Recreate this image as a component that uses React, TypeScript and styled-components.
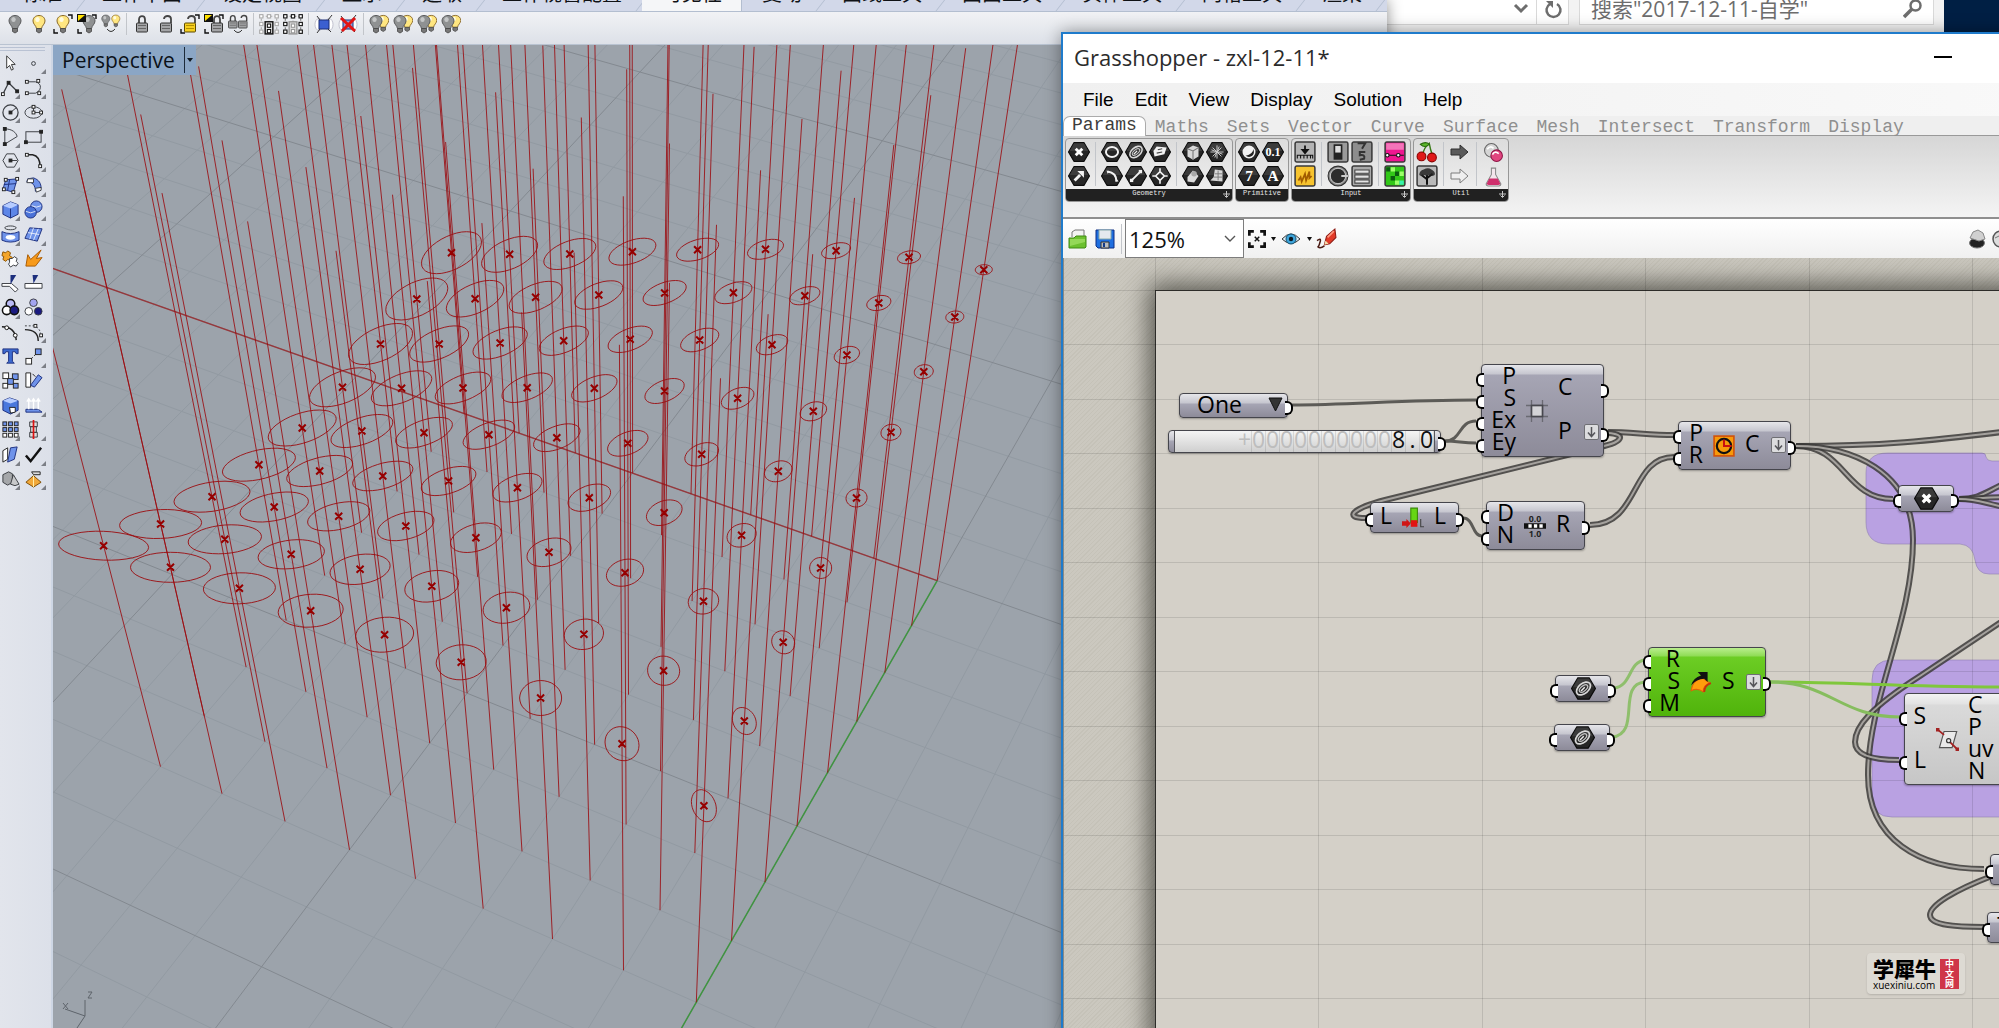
import React from "react";
import styled, { createGlobalStyle } from "styled-components";

const UI = `"Open Sans", "Noto Sans", "Noto Sans CJK SC", sans-serif`;
const CJK = `"Noto Sans CJK SC", "Open Sans", sans-serif`;

const Global = createGlobalStyle`
  * { box-sizing: border-box; }
  body { margin: 0; background: #001f44; font-family: ${UI}; }
  button, input, select { font: inherit; color: inherit; margin: 0; padding: 0; border: 0; background: none; border-radius: 0; }
  svg { display: block; }
`;

const Desktop = styled.main`
  position: relative;
  height: 100vh;
  overflow: hidden;
  background: #001f44;
`;

/* ---------- Rhino window ---------- */

const RhinoWindow = styled.section`
  position: absolute;
  inset: 0 auto 0 0;
  width: 1387px;
  display: flex;
  flex-direction: column;
  background: #dfe2ea;
  box-shadow: 0 0 14px rgba(0, 0, 0, 0.45);
  z-index: 2;
`;

const TabStrip = styled.nav`
  display: flex;
  align-items: flex-end;
  height: 12px;
  flex: none;
  overflow: hidden;
  background: #d2d8e9;
  border-bottom: 1px solid #b3bed0;
  padding-left: 2px;
`;

const RhinoTab = styled.button<{ $active?: boolean }>`
  position: relative;
  flex: none;
  height: 30px;
  padding: 0 20px 6px;
  font-family: ${CJK};
  font-size: 20px;
  line-height: 24px;
  color: #101216;
  background: ${(p) => (p.$active ? "#f5f6f8" : "transparent")};
  &::after {
    content: "";
    position: absolute;
    right: 0;
    bottom: 0;
    width: 1px;
    height: 14px;
    background: #b3bed0;
    transform: ${(p) => (p.$active ? "none" : "skewX(-38deg)")};
  }
`;

const RhinoToolbar = styled.div`
  display: flex;
  align-items: center;
  height: 33px;
  flex: none;
  padding: 0 0 8px 3px;
  background: linear-gradient(#f1f2f5, #dde1e8);
  border-bottom: 1px solid #b9c3d1;
`;

const IconButton = styled.button<{ $w?: number }>`
  width: ${(p) => p.$w ?? 24}px;
  height: 24px;
  flex: none;
  display: grid;
  place-items: center;
`;

const Divider = styled.span<{ $w?: number; $h?: number }>`
  width: ${(p) => p.$w ?? 7}px;
  height: ${(p) => p.$h ?? 22}px;
  flex: none;
  display: flex;
  justify-content: center;
  &::before {
    content: "";
    width: 1px;
    background: #c2c5ca;
  }
`;

const RhinoBody = styled.div`
  flex: 1;
  min-height: 0;
  display: flex;
`;

const Sidebar = styled.div`
  width: 53px;
  flex: none;
  padding-top: 2px;
  background: linear-gradient(90deg, #e2e5ec, #dce0e9);
  border-right: 2px solid #cdd6e4;
`;

const SidebarGrip = styled.div`
  height: 4px;
  width: 45px;
  border-top: 1px solid #b9c2d3;
  border-bottom: 1px solid #b9c2d3;
`;

const ToolGrid = styled.div`
  display: grid;
  grid-template-columns: 20px 26px;
  grid-template-rows: repeat(18, 1fr);
  height: 440px;
`;

const ToolButton = styled.button<{ $more?: boolean }>`
  position: relative;
  display: grid;
  place-items: center;
  min-height: 0;
  &::after {
    content: "";
    display: ${(p) => (p.$more ? "block" : "none")};
    position: absolute;
    right: 0;
    bottom: 1px;
    border-left: 5px solid transparent;
    border-bottom: 5px solid #7c7f86;
  }
`;

const Viewport = styled.div`
  position: relative;
  flex: 1;
  min-width: 0;
  background: #9ca3ab;
  overflow: hidden;
`;

const ViewportTitle = styled.button`
  position: absolute;
  left: 0;
  top: 0;
  height: 30px;
  display: flex;
  align-items: center;
  gap: 9px;
  padding: 0 1px 0 9px;
  background: #8ba6c5;
  color: #0b1118;
  font-size: 21px;
  line-height: 30px;
`;

const TitleArrow = styled.span`
  display: flex;
  align-items: center;
  height: 26px;
  padding: 0 2px;
  border-left: 1px solid #1c2a3a;
  &::before {
    content: "";
    border: 3px solid transparent;
    border-top: 4px solid #101820;
    border-bottom: 0;
  }
`;

/* ---------- Explorer window ---------- */

const ExplorerWindow = styled.section`
  position: absolute;
  top: 0;
  left: 1387px;
  width: 557px;
  height: 60px;
  display: flex;
  align-items: flex-start;
  background: #f3f3f3;
  z-index: 1;
`;

const AddressBar = styled.div`
  display: flex;
  width: 182px;
  height: 25px;
  background: #fff;
  border: 1px solid #d9d9d9;
  border-width: 0 1px 1px 0;
  justify-content: flex-end;
`;

const AddressButton = styled.button<{ $w: number; $line?: boolean }>`
  width: ${(p) => p.$w}px;
  display: grid;
  place-items: center;
  color: #6d6d6d;
  border-left: 1px solid ${(p) => (p.$line ? "#d9d9d9" : "transparent")};
  height: 24px;
  padding-bottom: 6px;
`;

const SearchBox = styled.label`
  display: flex;
  width: 355px;
  height: 25px;
  margin-left: 10px;
  padding: 0 10px 6px 11px;
  background: #fff;
  border: 1px solid #d9d9d9;
  border-top: 0;
  color: #6d6d6d;
  align-items: center;
`;

const SearchInput = styled.input`
  flex: 1;
  min-width: 0;
  height: 30px;
  font-family: "Open Sans", "Noto Sans CJK SC", sans-serif;
  font-size: 21px;
  line-height: 30px;
  outline: 0;
`;

/* ---------- Grasshopper window ---------- */

const GHWindow = styled.section`
  position: absolute;
  left: 1061px;
  right: -180px;
  top: 32px;
  bottom: -40px;
  display: flex;
  flex-direction: column;
  border: 2px solid #1f7bcb;
  background: #fff;
  box-shadow: 0 0 16px rgba(0, 0, 0, 0.4);
  z-index: 3;
`;

const TitleBar = styled.header`
  display: flex;
  align-items: center;
  height: 49px;
  flex: none;
  padding: 0 225px 3px 11px;
  font-size: 22px;
  color: #2b2b2b;
`;

const WindowTitle = styled.h1`
  margin: 0;
  flex: 1;
  font: inherit;
`;

const Minimize = styled.button`
  width: 18px;
  height: 20px;
  display: grid;
  place-items: center;
  &::before {
    content: "";
    width: 18px;
    height: 2px;
    background: #000;
  }
`;

const MenuBar = styled.nav`
  display: flex;
  align-items: center;
  gap: 21px;
  height: 33px;
  flex: none;
  padding-left: 20px;
  background: linear-gradient(90deg, #f0f0f0, #fafafa);
  font-family: "Liberation Sans", Arial, sans-serif;
  font-size: 19px;
  color: #000;
`;

const MenuItem = styled.button`
  line-height: 24px;
`;

const CategoryTabs = styled.nav`
  display: flex;
  height: 20px;
  flex: none;
  background: #efefef;
  border-bottom: 1px solid #999;
  font-family: "Liberation Mono", monospace;
  font-size: 18px;
`;

const CategoryTab = styled.button<{ $active?: boolean }>`
  height: ${(p) => (p.$active ? 20 : 19)}px;
  padding: ${(p) => (p.$active ? "0 8px 2px" : "2px 8px 0")};
  line-height: ${(p) => (p.$active ? 17 : 16)}px;
  color: ${(p) => (p.$active ? "#3c3c3c" : "#8f8f8f")};
  background: ${(p) => (p.$active ? "#fff" : "transparent")};
  border: 1px solid ${(p) => (p.$active ? "#ababab" : "transparent")};
  border-width: 1px 1px 0;
  border-radius: 7px 7px 0 0;
`;

const Ribbon = styled.div`
  display: flex;
  align-items: flex-start;
  gap: 2px;
  height: 83px;
  flex: none;
  padding: 2px 2px 0;
  background: linear-gradient(#d6d6d6, #f4f4f4);
  border-bottom: 2px solid #8f8f8f;
`;

const RibbonPanel = styled.div`
  display: flex;
  flex-direction: column;
  height: 64px;
  border: 1px solid #979797;
  border-radius: 4px;
  background: linear-gradient(#dcdcdc, #f2f2f2);
  overflow: hidden;
`;

const RibbonIcons = styled.div`
  display: flex;
  align-items: center;
  height: 50px;
  padding: 0 3px 0 1px;
`;

const RibbonGroup = styled.div`
  display: grid;
  grid-auto-flow: column;
  grid-template-rows: 24px 24px;
  grid-auto-columns: 24px;
`;

const RibbonLabel = styled.div`
  position: relative;
  display: grid;
  place-items: center;
  height: 12px;
  padding-bottom: 4px;
  background: #212121;
  color: #e6e6e6;
  font-family: "Liberation Mono", monospace;
  font-size: 7px;
  line-height: 8px;
`;

const PanelExpand = styled.span`
  position: absolute;
  right: 2px;
  top: 2px;
  width: 7px;
  height: 7px;
`;

const GHToolbar = styled.div`
  display: flex;
  align-items: center;
  height: 39px;
  flex: none;
  padding: 0 164px 0 1px;
  background: linear-gradient(#fff, #f0f0f0);
`;

const ZoomField = styled.label`
  position: relative;
  display: flex;
  align-items: center;
  width: 119px;
  height: 39px;
  border: 1px solid #7d7d7d;
  background: #fff;
  svg {
    position: absolute;
    right: 7px;
    pointer-events: none;
  }
`;

const ZoomSelect = styled.select`
  appearance: none;
  width: 100%;
  height: 36px;
  padding-left: 3px;
  font-size: 22px;
  line-height: 36px;
  color: #111;
  outline: 0;
`;

const Spacer = styled.span`
  flex: 1;
`;

const Canvas = styled.div`
  position: relative;
  flex: 1;
  min-height: 0;
  overflow: hidden;
  border-left: 1px solid #8a8a86;
  background: repeating-linear-gradient(135deg, #cbc8bf 0 2px, #c5c2b8 2px 3px);
`;

/* The document space: nodes keep the coordinates they have on the free canvas. */
const Space = styled.div`
  position: absolute;
  left: -1064px;
  top: -258px;
  width: 2200px;
  height: 1200px;
  font-size: 23px;
  color: #000;
`;

const Sheet = styled.div`
  position: absolute;
  left: 1155px;
  top: 290px;
  right: -200px;
  bottom: -200px;
  background: #d4d0c8;
  border: 1px solid #33322f;
  box-shadow: 0 0 24px 6px rgba(40, 40, 34, 0.7);
`;

const Wires = styled.svg`
  position: absolute;
  inset: 0;
`;

type Tone = "grey" | "green" | "light";
const tones: Record<Tone, string> = {
  grey: "linear-gradient(#e6e6ea 0, #c6c6cf 9px, #a6a5b4 10px, #8d8b99 100%)",
  green: "linear-gradient(#b9ee8d 0, #8fdc55 8px, #6ccd24 9px, #50b30b 100%)",
  light: "linear-gradient(#f2f2f2 0, #e2e2e2 10px, #dadada 11px, #c6c6c6 100%)",
};

const NodeBox = styled.div<{ $x: number; $y: number; $w: number; $h: number; $tone?: Tone }>`
  position: absolute;
  left: ${(p) => p.$x}px;
  top: ${(p) => p.$y}px;
  width: ${(p) => p.$w}px;
  height: ${(p) => p.$h}px;
  display: flex;
  align-items: stretch;
  gap: 10px;
  border: 1px solid #45454c;
  border-radius: 4px;
  background: ${(p) => tones[p.$tone ?? "grey"]};
  box-shadow: 0 1px 2px rgba(0, 0, 0, 0.3);
  line-height: 22px;
`;

const PortColumn = styled.div<{ $w?: number }>`
  display: flex;
  flex-direction: column;
  justify-content: center;
  ${(p) => (p.$w !== undefined ? `width: ${p.$w}px;` : "flex: 1;")}
`;

const port = `
  content: "";
  position: absolute;
  top: calc(50% - 5px);
  width: 6px;
  height: 10px;
  border: 2px solid #000;
  background: #fff;
`;

const InPort = styled.div<{ $h?: number }>`
  position: relative;
  flex: none;
  height: ${(p) => p.$h ?? 22}px;
  display: flex;
  justify-content: flex-end;
  align-items: center;
  padding-bottom: 5px;
  &::before {
    ${port}
    left: -6px;
    border-right: 0;
    border-radius: 6px 0 0 6px;
  }
`;

const OutPort = styled.div<{ $h?: number }>`
  position: relative;
  flex: none;
  height: ${(p) => p.$h ?? 22}px;
  display: flex;
  justify-content: space-between;
  align-items: center;
  padding: 0 4px 5px 0;
  &::after {
    ${port}
    right: -6px;
    border-left: 0;
    border-radius: 0 6px 6px 0;
  }
`;

const NodeIcon = styled.div`
  width: 22px;
  display: grid;
  place-items: center;
`;

const GraftMark = styled.span`
  width: 15px;
  height: 16px;
  display: grid;
  place-items: center;
  margin-top: 4px;
  border: 1px solid #6f6f74;
  border-radius: 2px;
  background: #dcdcde;
`;

const ValueList = styled.button`
  flex: 1;
  display: flex;
  align-items: center;
  justify-content: space-between;
  padding: 0 4px 3px 17px;
`;

const Scroller = styled.div`
  flex: 1;
  display: flex;
  justify-content: flex-end;
  height: 21px;
  margin: 0 5px;
  border: 1px solid #55555b;
  border-width: 0 1px;
  overflow: hidden;
  background: linear-gradient(#f4f4f4, #cfcfcf);
  line-height: 16px;
`;

const Digit = styled.span<{ $on?: boolean }>`
  width: 14px;
  text-align: center;
  border-right: 1px solid rgba(0, 0, 0, 0.1);
  color: ${(p) => (p.$on ? "#111" : "#bdbdbd")};
`;

const Watermark = styled.div`
  position: absolute;
  left: 1867px;
  top: 953px;
  width: 98px;
  height: 41px;
  display: flex;
  gap: 3px;
  align-items: center;
  padding: 0 6px;
  border-radius: 4px;
  background: #dddad3;
  box-shadow: 0 1px 2px rgba(0, 0, 0, 0.15);
`;

const WatermarkText = styled.div`
  flex: 1;
  display: flex;
  flex-direction: column;
  font-family: ${CJK};
  font-size: 21px;
  font-weight: 900;
  line-height: 22px;
`;

const WatermarkUrl = styled.small`
  font-family: "Open Sans", sans-serif;
  font-weight: 400;
  font-size: 10px;
  line-height: 12px;
`;

const Seal = styled.div`
  width: 19px;
  height: 30px;
  flex: none;
  display: grid;
  justify-items: center;
  background: #cf3548;
  color: #fff;
  font-family: ${CJK};
  font-weight: 700;
  font-size: 9px;
  line-height: 10px;
`;

/* ---------- Perspective scene ---------- */

const projectPoint = (u: number, v: number, top = 0): [number, number] => {
  const U = u / 8;
  const V = v / 8;
  const d = 1 + 0.1009 * U + 0.1968 * V - 0.2802 * top;
  return [
    (696.3 - 519.6 * U + 425.4 * V - 177.7 * top) / d,
    (1002.3 - 158.3 * U - 307.3 * V - 730 * top) / d,
  ];
};

/* Height on screen of each circle centre: one list per row, far column first. */
const centreY = [
  [545.7, 567.3, 588.3, 610.7, 634.7, 662.3, 698, 743.7, 805.7],
  [524, 539.3, 554.3, 569.3, 586.3, 607.7, 634.3, 670.7, 721],
  [496.7, 507, 516.3, 526, 537.7, 552.3, 572.7, 601.3, 642.3],
  [464.7, 471, 476, 481, 487.7, 497.7, 512.7, 535.3, 568],
  [428, 431, 432.7, 434.7, 437.7, 443.3, 454.3, 471.3, 498],
  [387.3, 388.3, 388, 387.7, 388.3, 391, 398.3, 411.3, 432.3],
  [344, 344, 343, 340.7, 339.3, 340, 344.7, 355, 371.7],
  [299, 298.7, 297.3, 295, 293, 292.7, 295.7, 303, 317],
  [252.7, 254.3, 254, 251.7, 249.7, 249.3, 250.7, 257.3, 269.7],
];

/* Outline size and slant along the four borders; the inside is blended from them. */
type Border = number[];
const blend = (near: Border, far: Border, left: Border, right: Border) => (i: number, v: number) => {
  const s = i / 8;
  const t = v / 8;
  return (
    (1 - t) * near[i] + t * far[i] + (1 - s) * left[v] + s * right[v] -
    ((1 - s) * (1 - t) * near[0] + s * (1 - t) * near[8] + (1 - s) * t * far[0] + s * t * far[8])
  );
};
const widthAt = blend(
  [90, 80, 72, 65, 58, 50, 42, 34, 25],
  [60, 56, 52, 47, 42, 36, 29, 23, 17],
  [90, 82, 76, 73, 68, 66, 64, 62, 60],
  [25, 24, 23, 22, 21, 20, 19, 18, 17]
);
const heightAt = blend(
  [29, 30, 31, 33, 35, 35, 35, 34, 32],
  [42, 36, 31, 27, 23, 20, 16, 13, 10],
  [29, 29, 31, 33, 36, 39, 41, 42, 42],
  [32, 27, 23, 21, 18, 16, 14, 12, 10]
);
const slantAt = blend(
  [-0.12, 0, 0.05, 0.1, 0.1, 0.05, 0, -0.1, -0.25],
  [0.53, 0.53, 0.52, 0.5, 0.47, 0.42, 0.35, 0.2, 0.05],
  [-0.12, 0.1, 0.33, 0.45, 0.53, 0.55, 0.55, 0.54, 0.53],
  [-0.25, -0.2, -0.1, 0, 0.05, 0.1, 0.1, 0.1, 0.05]
);

const seg = (a: [number, number], b: [number, number]) =>
  `M${a[0].toFixed(1)} ${a[1].toFixed(1)}L${b[0].toFixed(1)} ${b[1].toFixed(1)}`;

const buildScene = () => {
  let minor = "";
  let major = "";
  let columns = "";
  let rings = "";
  let marks = "";
  for (let u = -20; u <= 60; u++) {
    const d = seg(projectPoint(u, -10), projectPoint(u, 70));
    if (u % 5 === 0) major += d;
    else minor += d;
  }
  for (let v = -10; v <= 70; v++) {
    const d = seg(projectPoint(-20, v), projectPoint(60, v));
    if ((v - 8) % 5 === 0) major += d;
    else minor += d;
  }
  centreY.forEach((row, v) =>
    row.forEach((cy, i) => {
      const a = projectPoint(8 - i, v);
      const b = projectPoint(8 - i, v, 1);
      columns += seg(a, b);
      const cx = a[0] + ((b[0] - a[0]) * (cy - a[1])) / (b[1] - a[1]);
      const w = widthAt(i, v) / 2;
      const h = heightAt(i, v) / 2;
      const k = slantAt(i, v);
      for (let n = 0; n <= 36; n++) {
        const t = (n * Math.PI) / 18;
        rings += `${n ? "L" : "M"}${(cx + w * Math.cos(t)).toFixed(1)} ${(cy - h * Math.sin(t + k)).toFixed(1)}`;
      }
      marks += `M${(cx - 3.5).toFixed(1)} ${cy - 3.5}l7 7m0 -7l-7 7`;
    })
  );
  return { minor, major, columns, rings, marks };
};

const scene = buildScene();

const Perspective = () => (
  <svg width="100%" height="100%" fill="none" aria-label="Perspective view">
    <g transform="translate(-53 -45)">
      <path d={scene.minor} stroke="#929aa2" />
      <path d={scene.major} stroke="#838990" />
      <path d={seg(projectPoint(0, 8), projectPoint(30, 8))} stroke="#96383c" strokeWidth="1.4" />
      <path d={seg(projectPoint(0, 8), projectPoint(0, -4))} stroke="#3f9440" strokeWidth="1.5" />
      <path d={scene.columns} stroke="#9b0c10" strokeOpacity=".85" />
      <path d={scene.rings} stroke="#9b0c10" strokeOpacity=".9" />
      <path d={scene.marks} stroke="#960000" strokeWidth="2" />
      <g stroke="#5e646b">
        <path d="M85 1000V1016L65 1009M85 1016l-8 12" />
        <path d="M88 992h4l-4 6h4M63 1003l5 6m0-6l-5 6" />
      </g>
    </g>
  </svg>
);

/* ---------- Icons ---------- */

const Svg = ({ s = 20, h, box = "0 0 20 20", children }: { s?: number; h?: number; box?: string; children: React.ReactNode }) => (
  <svg width={s} height={h ?? s} viewBox={box} fill="none">
    {children}
  </svg>
);

const Corners = () => <path d="M1 15v4h4M15 1h4v4" stroke="#111" strokeWidth="1.4" />;
const Swatch = () => <><path d="M0 0h9v8H0z" fill="#111" /><path d="M1 1h7L1 7z" fill="#ffe000" /></>;

const Bulb = ({ lit, x = 0, k = 1 }: { lit?: boolean; x?: number; k?: number }) => (
  <g transform={`translate(${x} 0) scale(${k})`}>
    <path d="M10 1.5c-3.600 0-6 2.300-6 5.500 0 3 3 4.500 3.500 7.500h5C13 11.500 16 10 16 7c0-3.200-2.400-5.500-6-5.500z" fill={lit ? "#ffe680" : "#8f9192"} stroke={lit ? "#8a6a2a" : "#5a5b5d"} />
    <path d="M7.500 14.500h5v3l-2.500 1.500-2.500-1.500z" fill="#777" stroke="#444" strokeWidth=".8" />
    <ellipse cx="8.500" cy="5.500" rx="2.200" ry="2.500" fill={lit ? "#fffbe0" : "#c4c6c7"} />
  </g>
);

const DoubleBulb = () => (
  <Svg>
    <Bulb lit x={5} k={0.92} />
    <Bulb x={-3} />
  </Svg>
);

const Lock = ({ open, gold, x = 0, k = 1 }: { open?: boolean; gold?: boolean; x?: number; k?: number }) => (
  <g transform={`translate(${x} 0) scale(${k})`}>
    <path d={open ? "M8 5c0-4 7-4 7 0v4" : "M7 9V5.500c0-4.500 6-4.500 6 0V9"} stroke="#444" strokeWidth="1.800" />
    <rect x="4.500" y="9" width="11" height="9" rx="1" fill={gold ? "#f6cf1e" : "#a3a4a6"} stroke={gold ? "#5c4a00" : "#333"} />
    <path d="M6 11.500h8M6 14.500h8" stroke={gold ? "#b28f00" : "#666"} />
  </g>
);

const Dots = ({ dark }: { dark?: boolean }) => (
  <Svg s={22}>
    <path d="M3 3h14v14H3zM3 10h14M10 3v14" stroke={dark ? "#777" : "#aaa"} strokeDasharray="2 2" />
    {[3, 10, 17].map((x) => [3, 10, 17].map((y) => <rect key={`${x}-${y}`} x={x - 1.5} y={y - 1.5} width="3" height="3" fill="#fff" stroke={dark ? "#111" : "#aaa"} />))}
    <rect x="6.500" y="8" width="7" height="11" fill={dark ? "#ddd" : "#f0f0f0"} stroke={dark ? "#999" : "#111"} strokeWidth="1.300" />
    <rect x="8.500" y="10" width="3" height="3" fill="#fff" stroke={dark ? "#999" : "#111"} />
    <rect x="8.500" y="15" width="3" height="3" fill="#fff" stroke={dark ? "#999" : "#111"} />
  </Svg>
);

const Barrel = ({ off }: { off?: boolean }) => (
  <Svg>
    <ellipse cx="5" cy="10.500" rx="4" ry="6" fill="#fff" stroke="#aab" strokeWidth=".7" />
    <ellipse cx="15" cy="10.500" rx="4" ry="6" fill="#fff" stroke="#aab" strokeWidth=".7" />
    <rect x="5" y="6" width="10" height="9" fill={off ? "#8da0dc" : "#3b5fd0"} stroke="#1c2e78" />
    <path d="M3 19L6 15M14 6l4-5M3 2l3 4M14 15l3 3" stroke="#333" />
    {off && <path d="M3 4l14 13M17 4L4 17" stroke="#e31313" strokeWidth="3" />}
  </Svg>
);

const toolbarIcons: (React.ReactNode | null)[] = [
  <Svg><Bulb /></Svg>,
  <Svg><Bulb lit /></Svg>,
  <Svg><Bulb lit /><Corners /></Svg>,
  <Svg><Bulb x={2} /><Corners /><Swatch /></Svg>,
  <Svg><Bulb k={0.68} x={-2} /><Bulb lit k={0.68} x={8} /><path d="M6 15q4 5 8 0" stroke="#333" /></Svg>,
  null,
  <Svg><Lock /></Svg>,
  <Svg><Lock open /></Svg>,
  <Svg><Lock open gold /><Corners /></Svg>,
  <Svg><Lock x={3} /><Corners /><Swatch /></Svg>,
  <Svg><Lock k={0.78} x={-3} /><Lock open k={0.78} x={7} /><path d="M6 16q4 5 8 0" stroke="#333" /></Svg>,
  null,
  <Dots />,
  <Dots dark />,
  null,
  <Barrel />,
  <Barrel off />,
  null,
  <DoubleBulb />,
  <DoubleBulb />,
  <DoubleBulb />,
  <DoubleBulb />,
];

const K = "#3a3d42";
const B = "#6f93ea";
const N = "#1d2f7d";
const Sq = ({ x, y, f = "#fff" }: { x: number; y: number; f?: string }) => <rect x={x - 1.5} y={y - 1.5} width="3" height="3" fill={f} stroke="#222" />;

const sideIcons: [React.ReactNode, boolean][] = [
  [<path d="M6 2v13l3-3 2 5 2-1-2-5h4z" fill="#fff" stroke="#333" />, false],
  [<circle cx="10" cy="10" r="2" stroke={K} />, true],
  [<><path d="M2 17L8 5l9 9" stroke={K} strokeWidth="1.300" /><Sq x={2} y={17} /><Sq x={8} y={5} f="#222" /><Sq x={17} y={14} f="#222" /></>, true],
  [<><path d="M3 4h9c8 2 6 10 0 12H3" stroke={K} /><Sq x={3} y={4} /><Sq x={15} y={3} /><Sq x={3} y={16} /><Sq x={16} y={16} /></>, true],
  [<><circle cx="10" cy="10" r="8" stroke={K} strokeWidth="1.300" /><path d="M10 10l6-5" stroke={K} /><Sq x={10} y={10} f="#222" /></>, true],
  [<><ellipse cx="10" cy="10" rx="9" ry="6" stroke={K} /><path d="M10 3v7h9" stroke={K} /><Sq x={10} y={4} /><Sq x={10} y={10} /><Sq x={18} y={10} /></>, true],
  [<><path d="M4 2c8 0 12 4 13 8L4 18z" stroke={K} /><Sq x={4} y={2} f="#222" /><Sq x={4} y={18} f="#222" /></>, true],
  [<><rect x="2" y="5" width="16" height="11" stroke={K} /><Sq x={2} y={16} f="#222" /><Sq x={18} y={5} f="#222" /></>, true],
  [<><path d="M6 3h8l4 7-4 7H6l-4-7z" stroke={K} /><path d="M10 10h7" stroke={K} /><Sq x={10} y={10} f="#222" /></>, true],
  [<><path d="M2 4h7c6 1 8 6 8 13" stroke="#222" strokeWidth="1.600" /><Sq x={3} y={4} /><Sq x={17} y={16} /></>, true],
  [<><path d="M5 4l12-1-4 14L2 14z" fill={B} stroke={N} /><path d="M9 4L7 15M3 9l13-1" stroke={N} /><Sq x={5} y={4} /><Sq x={17} y={3} /><Sq x={3} y={14} /><Sq x={13} y={17} /></>, true],
  [<><path d="M4 3l6-1c6 2 8 6 8 11l-6 3C12 10 9 6 3 6z" fill={B} stroke={N} /><path d="M4 3h6v4H3zM12 13l6-1v3l-5 2z" fill="#fff" stroke={K} /></>, true],
  [<><path d="M2 6l8-4 8 3v10l-8 4-8-4z" fill="#5d86e8" stroke={N} /><path d="M2 6l8 3 8-4-8-3z" fill="#b6ccff" /><path d="M10 9v10" stroke={N} /></>, true],
  [<><circle cx="13" cy="7" r="6" fill={B} stroke={N} /><circle cx="7" cy="13" r="6" fill="#4a72d8" stroke={N} /><path d="M2 12q5 3 10 0M8 6q5 3 10 0" stroke="#fff" strokeWidth=".8" /></>, true],
  [<><ellipse cx="10" cy="3" rx="6" ry="2" stroke={K} /><path d="M1 7q9 4 18 0v9q-9 4-18 0z" fill={B} stroke={N} /><ellipse cx="10" cy="13" rx="5" ry="2.500" fill="#fff" /></>, true],
  [<><path d="M6 3l13 1-5 13-13-3z" fill={B} stroke={N} /><path d="M10 3L6 15M15 4l-5 12M4 8l12 2" stroke="#fff" strokeWidth=".8" /></>, true],
  [<><path d="M2 3l3 1 2-2 3 2-1 3 3 2-2 3-3-1-2 2-3-2 1-3-2-1z" fill="#f4a52a" stroke="#8a5200" /><path d="M9 10l3 0 2-2 3 2-1 3 2 2-2 3-3-1-3 2-2-3 1-2z" fill="#fff" stroke={K} /></>, false],
  [<path d="M2 18L4 6l3 5L18 1l-5 9 6-1-7 9z" fill="#f79a1b" stroke="#a85a00" />, false],
  [<><path d="M1 10h10l7 6-3 3-6-6H1z" fill="#fff" stroke={K} /><path d="M10 1h6l-6 10z" fill={N} /></>, false],
  [<><path d="M1 10h18v5H1z" fill="#fff" stroke={K} /><path d="M9 1h6l-5 9z" fill={N} /></>, false],
  [<><circle cx="10" cy="6" r="4.500" fill="#b9baf6" stroke="#111" strokeWidth="1.600" /><circle cx="6" cy="13" r="4.500" fill="#fff" stroke="#111" strokeWidth="1.600" /><circle cx="14" cy="13" r="4.500" fill="#1a1a80" stroke="#111" strokeWidth="1.600" /></>, true],
  [<><circle cx="10" cy="5" r="4" fill="#a3a4f0" stroke={K} /><circle cx="5" cy="14" r="4" fill="#fff" stroke={K} /><circle cx="15" cy="14" r="4" fill="#1a1a80" stroke={K} /></>, false],
  [<><path d="M1 4q14 0 15 14" stroke="#222" strokeWidth="1.500" /><circle cx="6" cy="5" r="2" fill="#fff" stroke="#111" /><circle cx="15" cy="13" r="2" fill="#fff" stroke="#111" /></>, false],
  [<><path d="M1 7q14 0 14 12" stroke="#222" strokeWidth="1.500" /><path d="M1 3h10q7 3 7 12" stroke={K} strokeDasharray="2 2" /><Sq x={12} y={3} /><Sq x={18} y={13} /></>, true],
  [<path d="M2 2h16v5h-2l-1-2h-3v10l2 2H6l2-2V5H5L4 7H2z" fill="#3d6ad0" stroke={N} />, false],
  [<><path d="M5 15l9-9" stroke="#222" strokeDasharray="2 2" /><rect x="2" y="12" width="6" height="6" fill="#fff" stroke="#222" /><rect x="12" y="2" width="6" height="6" fill={B} stroke="#222" /></>, true],
  [<><rect x="2" y="2" width="6" height="6" fill="#fff" stroke="#222" /><rect x="12" y="3" width="6" height="6" fill={B} stroke="#222" /><rect x="7" y="8" width="6" height="6" fill={B} stroke="#222" /><rect x="2" y="13" width="5" height="5" fill="#fff" stroke="#222" /><rect x="13" y="13" width="5" height="5" fill={B} stroke="#222" /></>, false],
  [<><path d="M2 2h5v15H2z" fill="#fff" stroke="#222" /><path d="M15 4l4 3-8 10-4-2z" fill={B} stroke={N} /><path d="M9 3l3 3" stroke="#222" /></>, false],
  [<><path d="M2 5l7-3 9 3v10l-8 4-8-4z" fill="#4a78dd" stroke={N} /><path d="M2 5l8 3 8-3-9-3z" fill="#b6ccff" /><path d="M9 12h6v5l-5 1z" fill="#fff" stroke="#222" /></>, true],
  [<><path d="M2 14h13l4 3H2z" fill={B} stroke={N} /><path d="M5 14V3M10 14V3M15 14V3M3 6l2-3 2 3M8 6l2-3 2 3M13 6l2-3 2 3" stroke="#fff" strokeWidth="1.500" /></>, true],
  [<>{[2, 8, 14].map((x) => [2, 8, 14].map((y) => <rect key={`${x}${y}`} x={x} y={y} width="4" height="4" fill={y === 14 ? "#fff" : B} stroke="#222" />))}</>, true],
  [<><path d="M6 2h8v5H6zM7 7h6v6H7zM6 13h8v5H6z" fill="#ddd" stroke={K} /><path d="M10 0v20" stroke="#d11" strokeWidth="1.800" /></>, true],
  [<><path d="M2 6l5-3v12l-5 3z" fill="#fff" stroke="#222" /><path d="M10 3l7-1-3 13-7 3z" fill={B} stroke={N} /></>, true],
  [<path d="M2 11l5 6L18 3" stroke="#111" strokeWidth="2.600" />, true],
  [<><path d="M2 6l6-3 4 2v9l-5 3-5-3z" fill="#a5a7aa" stroke={K} /><path d="M13 6l6 10q-4 3-9 0z" fill="#c8c9cb" stroke={K} /></>, true],
  [<><path d="M2 14l8-7 8 7-8 5z" fill="#f2a93a" stroke="#7a4a00" /><path d="M10 7v12" stroke="#fff0b0" /><path d="M8 3h9v3h-7z" fill="#ddd" stroke="#222" /></>, true],
];

const Hex = ({ s = 22, children }: { s?: number; children?: React.ReactNode }) => (
  <Svg s={s}>
    <path d="M5.500 1.500h9L19.500 10l-5 8.500h-9L.500 10z" fill="#262626" stroke="#0c0c0c" />
    <path d="M5.500 2h9l4 7H1.500z" fill="#4a4a4a" opacity=".6" />
    {children}
  </Svg>
);

const Glyph = ({ t, size }: { t: string; size: number }) => (
  <text x="10" y={10 + size * 0.35} textAnchor="middle" fill="#fff" fontFamily="Liberation Serif, serif" fontWeight="700" fontSize={size}>
    {t}
  </text>
);

const Tile = ({ fill = "#b4b4b4", children }: { fill?: string; children?: React.ReactNode }) => (
  <Svg s={22}>
    <rect x="1" y="1" width="18" height="18" rx="1.500" fill={fill} stroke="#3a3a3a" strokeWidth="1.400" />
    {children}
  </Svg>
);

const W = "#f2f2f2";
const CurveMark = (
  <>
    <ellipse cx="10" cy="10" rx="6.500" ry="4" transform="rotate(-40 10 10)" stroke="#d8d8d8" strokeWidth="1.400" />
    <ellipse cx="10" cy="10" rx="4" ry="2" transform="rotate(-40 10 10)" stroke="#c4c4c4" />
    <path d="M8 12l3-3" stroke="#eee" strokeWidth="1.200" />
  </>
);
const CrossMark = <path d="M7 7l6 6M13 7l-6 6" stroke="#fff" strokeWidth="2.600" />;

type Panel = { label: string; more: boolean; groups: React.ReactNode[][] };
const panels: Panel[] = [
  {
    label: "Geometry",
    more: true,
    groups: [
      [<Hex>{CrossMark}</Hex>, <Hex><path d="M6 14l5-5" stroke={W} strokeWidth="2.600" /><path d="M8.500 5.500h6v6z" fill={W} /></Hex>],
      [
        <Hex><ellipse cx="10" cy="10" rx="5.500" ry="4.500" stroke={W} strokeWidth="1.800" /></Hex>,
        <Hex><path d="M6 6q8 1 8 9" stroke={W} strokeWidth="1.800" /><path d="M5 5l3 1-2 2zM13 15h3l-2-3z" fill={W} /></Hex>,
        <Hex>{CurveMark}</Hex>,
        <Hex><path d="M6 14l8-8" stroke={W} strokeWidth="1.800" /><rect x="4.500" y="12.500" width="3" height="3" fill={W} /><rect x="12.500" y="4.500" width="3" height="3" fill={W} /></Hex>,
        <Hex><path d="M4 9l3-4 9 1-2 6-9 2z" fill={W} /><path d="M8 8l4-1M7 11l5-1" stroke="#444" /></Hex>,
        <Hex><path d="M6 10l4-4 4 4-4 4zM10 3v3M10 14v3M3 10h3M14 10h3" stroke={W} strokeWidth="1.500" /></Hex>,
      ],
      [
        <Hex><path d="M5 7l5-3 5 2v8l-5 3-5-3z" fill="#d8d8d8" /><path d="M5 7l5 2 5-3M10 9v8" stroke="#777" /></Hex>,
        <Hex><path d="M5 11l5-6 5 5-4 6-6-1z" fill="#ddd" /><circle cx="11" cy="8" r="2.500" fill="#aaa" /></Hex>,
        <Hex><path d="M4 10h12M10 4v12M6 6l8 8M14 6l-8 8M5 8l10 4M8 15l4-10" stroke="#c8c8c8" strokeWidth=".9" /></Hex>,
        <Hex><path d="M8 4l7 1v10l-11-1 3-3z" fill="#d8d8d8" /><path d="M8 8h7M7 11h8M11 5v9" stroke="#777" strokeWidth=".8" /></Hex>,
      ],
    ],
  },
  {
    label: "Primitive",
    more: false,
    groups: [
      [
        <Hex><circle cx="10" cy="10" r="5.200" fill="#222" stroke={W} strokeWidth="1.400" /><path d="M6.300 13.700A5.200 5.200 0 0113.700 6.300q1 5-7.400 7.400z" fill={W} /></Hex>,
        <Hex><Glyph t="7" size={14} /></Hex>,
        <Hex><Glyph t="0.1" size={11} /></Hex>,
        <Hex><Glyph t="A" size={14} /></Hex>,
      ],
    ],
  },
  {
    label: "Input",
    more: true,
    groups: [
      [
        <Tile><path d="M10 4v6M7.500 8l2.500 3 2.500-3z" stroke="#111" strokeWidth="1.600" fill="#111" /><path d="M3 16v-3h14v3M6 13v3M9 13v3M12 13v3M15 13v3" stroke="#111" /></Tile>,
        <Tile fill="#f7c32e"><path d="M4 14l2-3 1 4 3-7 1 6 3-8v6l2-2" stroke="#a15c00" strokeWidth="1.600" /></Tile>,
      ],
      [
        <Tile fill="#9a9a9a"><rect x="6" y="3" width="8" height="14" fill="#222" /><rect x="7.500" y="4.500" width="5" height="6" fill="#ddd" /></Tile>,
        <Svg s={22}><circle cx="10" cy="10" r="9" fill="#8a8a8a" stroke="#333" /><circle cx="10" cy="10" r="7" fill="#2c2c2c" stroke="#ddd" strokeWidth=".8" /><path d="M13 10h6" stroke="#ccc" strokeWidth="2" /></Svg>,
        <Tile fill="#8d8d8d"><path d="M6 2h7l-3 5M13 10H8v3q5-1 4 3l-4 1" stroke="#333" strokeWidth="1.800" /></Tile>,
        <Tile fill="#aaa"><path d="M3.500 4.500h13v3h-13zM3.500 9h13v3h-13zM3.500 13.500h13v3h-13z" fill="#e4e4e4" stroke="#444" /></Tile>,
      ],
      [
        <Tile fill="#ee1690"><path d="M2 2h16v6H2z" fill="#f69ccb" opacity=".7" /><path d="M2 13h16" stroke="#111" /><circle cx="3" cy="13" r="1.600" fill="#fff" stroke="#111" /><circle cx="13" cy="13" r="1.600" fill="#fff" stroke="#111" /></Tile>,
        <Tile fill="#32c818"><path d="M2 2h4v4H2zM10 6h4v4h-4zM6 10h4v4H6z" fill="#0b5d10" /><path d="M6 2h4v4H6zM14 6h4v4h-4zM10 14h4v4h-4z" fill="#9dff6a" /><path d="M14 14h4v4h-4z" fill="#38f0b0" /></Tile>,
      ],
    ],
  },
  {
    label: "Util",
    more: true,
    groups: [
      [
        <Svg s={22}><path d="M6 13Q7 6 12 2q1 6 3 11" stroke="#3a7a17" strokeWidth="1.300" /><path d="M4 3q5-3 8 0-4 4-8 0z" fill="#5cb82a" stroke="#2b6a0d" /><circle cx="5" cy="14" r="4" fill="#e01818" stroke="#8b0000" /><circle cx="14.500" cy="15" r="4" fill="#e01818" stroke="#8b0000" /></Svg>,
        <Tile fill="#b9b9b9"><path d="M10 18V9M10 13L5 9M10 12l5-4" stroke="#111" strokeWidth="1.800" /><path d="M3 9q0-4 4-5 4-2 7 0 4 2 3 5-3 2-5 0-2 2-4 0-3 2-5 0z" fill="#222" opacity=".85" /></Tile>,
      ],
      [
        <Svg s={20}><path d="M1 7h9V3l8 7-8 7v-4H1z" fill="#5a5a5a" stroke="#2e2e2e" /></Svg>,
        <Svg s={20}><path d="M1 7h9V3l8 7-8 7v-4H1z" fill="#efefef" stroke="#7d7d7d" /></Svg>,
      ],
      [
        <Svg s={21}><circle cx="8" cy="8" r="6.500" fill="#d5d5d5" stroke="#666" /><circle cx="13" cy="13" r="5.500" fill="#e0457f" stroke="#8d1545" /><path d="M4 7q3-4 6-1M9 12q2-4 6-1" stroke="#fff" strokeWidth="1.600" /></Svg>,
        <Svg s={21}><path d="M8 2h4v6l5 9q0 2-2 2H5q-2 0-2-2l5-9z" fill="#f3e6ec" stroke="#888" /><path d="M6 12h8l2.500 5q0 1-2 1H5.500q-2 0-2-1z" fill="#cf2f6c" /></Svg>,
      ],
    ],
  },
];

const Plus = () => (
  <Svg s={7} box="0 0 7 7">
    <path d="M3.500 0v6M0 3h7M1.500 4.500l2 2 2-2" stroke="#c9c9c9" />
  </Svg>
);

const DownArrow = () => (
  <svg width="11" height="12" viewBox="0 0 11 12" fill="none">
    <path d="M5.500 1v9M2 6.500l3.500 4 3.500-4" stroke="#55555a" strokeWidth="1.500" />
  </svg>
);

const Caret = () => (
  <svg width="5" height="4" viewBox="0 0 5 4">
    <path d="M0 0h5L2.500 4z" fill="#111" />
  </svg>
);

/* ---------- Canvas content ---------- */

type NodeProps = {
  x: number; y: number; w: number; h: number; tone?: Tone;
  inW: number; inputs: string[]; outputs: string[]; graft?: number; icon: React.ReactNode;
};

/* Both columns share the height of the longer one, so a short list is spread over it. */
const Component = ({ x, y, w, h, tone, inW, inputs, outputs, graft, icon }: NodeProps) => {
  const stack = Math.max(inputs.length, outputs.length) * 22;
  return (
    <NodeBox $x={x} $y={y} $w={w} $h={h} $tone={tone}>
      <PortColumn $w={inW}>
        {inputs.map((t) => <InPort key={t} $h={stack / inputs.length}>{t}</InPort>)}
      </PortColumn>
      <NodeIcon>{icon}</NodeIcon>
      <PortColumn>
        {outputs.map((t, i) => (
          <OutPort key={t} $h={stack / outputs.length}>
            {t}
            {graft === i && <GraftMark><DownArrow /></GraftMark>}
          </OutPort>
        ))}
      </PortColumn>
    </NodeBox>
  );
};

const ParamBody = styled(NodeBox)`
  gap: 0;
  align-items: center;
`;

const ParamOut = styled(OutPort)`
  align-self: center;
  padding: 0;
  width: 0;
`;

const Param = ({ x, y, curve }: { x: number; y: number; curve?: boolean }) => (
  <ParamBody $x={x} $y={y} $w={56} $h={27}>
    <InPort />
    <Spacer />
    <Hex s={25}>{curve ? CurveMark : CrossMark}</Hex>
    <Spacer />
    <ParamOut />
  </ParamBody>
);

const gridX = [1155, 1318, 1482, 1645, 1809, 1972];
const gridY = [290, 344, 399, 453, 508, 562, 617, 671, 726, 780, 835, 889, 944, 998];

const doubleWires = [
  "M1608 432C1630 432 1650 435 1674 435",
  "M1608 433C1626 434 1624 442 1600 447L1385 500C1354 508 1342 518 1366 518",
  "M1590 525C1640 525 1630 457 1674 457",
  "M1796 446C1880 446 1930 441 2010 431",
  "M1796 446C1845 446 1845 499 1893 499",
  "M1796 446C1850 446 1913 470 1913 540C1913 620 1868 700 1868 775C1868 840 1920 869 1984 869",
  "M1959 499C1980 499 1985 492 2010 481",
  "M1959 499C1980 499 1985 497 2010 497",
  "M1959 499C1980 499 1985 504 2010 508",
  "M2010 616L1920 676C1870 708 1855 727 1855 742C1855 756 1875 760 1899 760",
  "M1992 876C1955 890 1930 905 1930 915C1930 926 1960 927 1984 927",
];
const singleWires = ["M1292 405C1350 405 1400 400 1476 400", "M1445 441C1462 441 1458 421 1476 421", "M1445 441C1458 441 1462 443 1476 443", "M1463 518C1474 518 1472 536 1482 536"];

const CanvasWires = () => (
  <Wires width="2200" height="1200" fill="none" aria-hidden="true">
    <g fill="#a884f2" fillOpacity=".62" stroke="#8f80b0" strokeOpacity=".6">
      <path d="M1866 473Q1866 453 1888 453H1982Q1986 453 1986 457Q1987 461 1992 461H2050V574H1989Q1977 574 1975 560Q1973 545 1960 544H1888Q1866 544 1866 522z" />
      <path d="M1892 660H2050V817H1892Q1872 817 1872 797V680Q1872 660 1892 660z" />
    </g>
    <g stroke="#000" strokeOpacity=".11">
      {gridX.map((x) => <path key={x} d={`M${x + 0.5} 258V1100`} />)}
      {gridY.map((y) => <path key={y} d={`M1063 ${y + 0.5}H2100`} />)}
    </g>
    {singleWires.map((d) => <path key={d} d={d} stroke="#5c5b57" strokeWidth="3" />)}
    {doubleWires.map((d) => (
      <g key={d}>
        <path d={d} stroke="#3c3b39" strokeOpacity=".85" strokeWidth="6" />
        <path d={d} stroke="#a5a29e" strokeWidth="2" />
      </g>
    ))}
    <g strokeWidth="3">
      <path d="M1614 688C1632 686 1628 662 1645 660" stroke="#8fbf6c" />
      <path d="M1612 737C1642 734 1616 684 1645 682" stroke="#8fbf6c" />
      <path d="M1770 682C1850 682 1900 687 2010 687" stroke="#7fc73c" />
      <path d="M1770 682C1830 682 1840 717 1900 717" stroke="#86bd5e" />
    </g>
  </Wires>
);

const squareGridIcon = <Svg s={22}><path d="M5 0v20M15 0v20M0 5h20M0 15h20" stroke="#6a6a72" strokeWidth="1.200" /><rect x="5" y="5" width="10" height="10" fill="#d3d3d6" stroke="#48484e" strokeWidth="1.500" /></Svg>;
const circleIcon = <Svg s={22}><rect x="1" y="1" width="18" height="18" fill="#f79a0a" stroke="#d2530a" strokeWidth="1.500" /><circle cx="10" cy="10" r="6.500" stroke="#111" strokeWidth="2" /><path d="M10 4v6h7" stroke="#c81010" strokeWidth="1.800" /></Svg>;
const lengthIcon = <Svg s={22}><path d="M8 1h6v13H8z" fill="#66d614" stroke="#3b8a08" /><path d="M8 12h6v6H8z" fill="#e11414" /><path d="M0 13h4v-2l4 4-4 4v-2H0z" fill="#d01616" /><path d="M17 11v7h3" stroke="#444" /></Svg>;
const rangeIcon = (
  <Svg s={22}>
    <g fontFamily="Open Sans, sans-serif" fontSize="8" fontWeight="700" fill="#222" textAnchor="middle"><text x="10" y="6">0.0</text><text x="10" y="20">1.0</text></g>
    <rect x="0" y="7.500" width="20" height="5" fill="#111" /><path d="M4 10h15" stroke="#fff" strokeWidth="3" strokeDasharray="3 2" />
  </Svg>
);
const sweepIcon = <Svg s={22}><path d="M1 18Q2 9 11 6l7 5q-6 2-6 8-5-4-11-1z" fill="#ff9d0c" stroke="#e0620a" /><path d="M1 13Q3 6 10 4L7 1h9v9l-3-3Q6 7 1 13z" fill="#111" /><path d="M19 11q-6 2-6 8" stroke="#c8300c" strokeWidth="1.600" /></Svg>;
const surfaceLineIcon = <Svg s={23}><path d="M7 3h11l-4 14H3z" fill="#e9e9e9" stroke="#555" /><path d="M1 1l6 5M12 12l7 7" stroke="#a32222" strokeWidth="1.600" /><path d="M0 0h3v3H0zM17 17h3v3h-3z" fill="#a32222" /><circle cx="11" cy="11" r="1.800" stroke="#333" /></Svg>;

const App = () => (
  <>
    <Global />
    <Desktop>
      <RhinoWindow aria-label="Rhino">
        <TabStrip>
          {["标准", "工作平面", "设定视图", "显示", "选取", "工作视窗配置", "可见性", "变动", "曲线工具", "曲面工具", "实体工具", "网格工具", "渲染", "出图"].map((t) => (
            <RhinoTab key={t} $active={t === "可见性"}>{t}</RhinoTab>
          ))}
        </TabStrip>
        <RhinoToolbar>
          {toolbarIcons.map((icon, i) => (icon ? <IconButton key={i}>{icon}</IconButton> : <Divider key={i} />))}
        </RhinoToolbar>
        <RhinoBody>
          <Sidebar>
            <SidebarGrip />
            <ToolGrid>
              {sideIcons.map(([icon, more], i) => (
                <ToolButton key={i} $more={more}><Svg s={19}>{icon}</Svg></ToolButton>
              ))}
            </ToolGrid>
          </Sidebar>
          <Viewport>
            <Perspective />
            <ViewportTitle>Perspective<TitleArrow /></ViewportTitle>
          </Viewport>
        </RhinoBody>
      </RhinoWindow>

      <ExplorerWindow aria-label="Explorer">
        <AddressBar>
          <AddressButton $w={32}><Svg s={16} box="0 0 16 16"><path d="M2 4l6 6 6-6" stroke="currentColor" strokeWidth="3" /></Svg></AddressButton>
          <AddressButton $w={32} $line><Svg s={20}><path d="M14 4a7 7 0 11-7 0" stroke="currentColor" strokeWidth="2.500" /><path d="M3 1h7v7z" fill="currentColor" /></Svg></AddressButton>
        </AddressBar>
        <SearchBox>
          <SearchInput aria-label="搜索" defaultValue={'搜索"2017-12-11-自学"'} />
          <Svg><circle cx="12.500" cy="6.500" r="5" stroke="currentColor" strokeWidth="2.500" /><path d="M9 10l-8 8" stroke="currentColor" strokeWidth="3.500" /></Svg>
        </SearchBox>
      </ExplorerWindow>

      <GHWindow aria-label="Grasshopper">
        <TitleBar>
          <WindowTitle>Grasshopper - zxl-12-11*</WindowTitle>
          <Minimize aria-label="Minimize" />
        </TitleBar>
        <MenuBar>
          {["File", "Edit", "View", "Display", "Solution", "Help"].map((t) => <MenuItem key={t}>{t}</MenuItem>)}
        </MenuBar>
        <CategoryTabs>
          {["Params", "Maths", "Sets", "Vector", "Curve", "Surface", "Mesh", "Intersect", "Transform", "Display"].map((t, i) => (
            <CategoryTab key={t} $active={i === 0}>{t}</CategoryTab>
          ))}
        </CategoryTabs>
        <Ribbon>
          {panels.map((p) => (
            <RibbonPanel key={p.label}>
              <RibbonIcons>
                {p.groups.map((g, i) => (
                  <React.Fragment key={i}>
                    {i > 0 && <Divider $w={9} $h={44} />}
                    <RibbonGroup>{g.map((icon, j) => <IconButton key={j}>{icon}</IconButton>)}</RibbonGroup>
                  </React.Fragment>
                ))}
              </RibbonIcons>
              <RibbonLabel>
                {p.label}
                {p.more && <PanelExpand><Plus /></PanelExpand>}
              </RibbonLabel>
            </RibbonPanel>
          ))}
        </Ribbon>
        <GHToolbar>
          <IconButton $w={27}><Svg><path d="M4 8V3l3-2h9v8" fill="#f3f3f3" stroke="#777" /><path d="M1 9h5l2-2h10v11l-1 1H1z" fill="#6cc02f" stroke="#3f8a13" /><path d="M2 10h15v3L2 17z" fill="#a5e26a" opacity=".7" /></Svg></IconButton>
          <IconButton $w={27}><Svg><path d="M1 1h18v18H3l-2-2z" fill="#1f6fe0" stroke="#0c2f86" /><path d="M4 1h12v9H4z" fill="#e5e9ee" stroke="#8aa" /><path d="M6 13h8v6H6z" fill="#b9bcc0" stroke="#333" /><path d="M8 14h2v4H8z" fill="#123a8a" /></Svg></IconButton>
          <Divider $w={7} $h={30} />
          <ZoomField>
            <ZoomSelect aria-label="Zoom" defaultValue="125%"><option>125%</option></ZoomSelect>
            <Svg s={12} box="0 0 12 12"><path d="M1 3l5 5 5-5" stroke="#555" strokeWidth="1.400" /></Svg>
          </ZoomField>
          <IconButton $w={26}><Svg s={18}><path d="M1.500 6.500V1.500H6.500M13.500 1.500h5V6.500M18.500 13.500v5H13.500M6.500 18.500H1.500V13.500" stroke="#111" strokeWidth="3" /><path d="M7.500 7.500l5 5M12.500 7.500l-5 5" stroke="#111" strokeWidth="1.600" /></Svg></IconButton>
          <IconButton $w={6}><Caret /></IconButton>
          <IconButton $w={30}><Svg><path d="M1 10Q10 0 19 10Q10 19 1 10z" fill="#dff1fa" stroke="#333" /><circle cx="10" cy="10" r="5" fill="#3fa6dc" stroke="#14506f" /><circle cx="10" cy="10" r="2.200" fill="#0a1a24" /></Svg></IconButton>
          <IconButton $w={6}><Caret /></IconButton>
          <IconButton $w={28}><Svg s={21}><path d="M1 12q4-3 3 1t-2 5q2 2 6-1" stroke="#4a1a12" strokeWidth="1.500" /><path d="M8 16l2-8 8-7 1 8-6 6z" fill="#e23a28" stroke="#8d1a12" /><path d="M8 16l1-4 3 3z" fill="#f5d9a8" /><path d="M11 9l6-6" stroke="#ff9a80" strokeWidth="1.600" /></Svg></IconButton>
          <Spacer />
          <IconButton $w={24}><Svg><ellipse cx="10" cy="14" rx="7.500" ry="5" fill="#222" stroke="#777" /><path d="M3 9l3-6 5-2 5 3 2 6-6 2z" fill="#d0d0d0" stroke="#888" /></Svg></IconButton>
          <IconButton $w={24}><Svg><circle cx="10" cy="10" r="8" fill="#ddd" stroke="#555" strokeWidth="1.500" /><path d="M4 9l6-3 6 3" stroke="#777" /></Svg></IconButton>
        </GHToolbar>
        <Canvas>
          <Space>
            <Sheet />
            <CanvasWires />
            <ParamBody $x={1179} $y={393} $w={109} $h={25}>
              <ValueList>
                One
                <svg width="15" height="15" viewBox="0 0 15 15"><path d="M1 1h13L7.500 14z" fill="#333" stroke="#111" /></svg>
              </ValueList>
              <ParamOut />
            </ParamBody>
            <ParamBody $x={1168} $y={430} $w={273} $h={23}>
              <Scroller>
                <Digit>+</Digit>
                {Array.from({ length: 10 }, (_, i) => <Digit key={i}>0</Digit>)}
                <Digit $on>8</Digit>
                <Digit $on>.</Digit>
                <Digit $on>0</Digit>
              </Scroller>
              <ParamOut />
            </ParamBody>
            <Component x={1481} y={364} w={123} h={93} inW={34} inputs={["P", "S", "Ex", "Ey"]} outputs={["C", "P"]} graft={1} icon={squareGridIcon} />
            <Component x={1370} y={502} w={89} h={31} inW={21} inputs={["L"]} outputs={["L"]} icon={lengthIcon} />
            <Component x={1486} y={501} w={99} h={49} inW={27} inputs={["D", "N"]} outputs={["R"]} icon={rangeIcon} />
            <Component x={1678} y={421} w={113} h={49} inW={24} inputs={["P", "R"]} outputs={["C"]} graft={0} icon={circleIcon} />
            <Param x={1898} y={485} />
            <Param x={1555} y={675} curve />
            <Param x={1554} y={724} curve />
            <Component x={1648} y={647} w={118} h={70} tone="green" inW={31} inputs={["R", "S", "M"]} outputs={["S"]} graft={0} icon={sweepIcon} />
            <Component x={1904} y={693} w={160} h={92} tone="light" inW={21} inputs={["S", "L"]} outputs={["C", "P", "uv", "N"]} icon={surfaceLineIcon} />
            <Component x={1990} y={854} w={90} h={31} inW={22} inputs={["L"]} outputs={["L"]} icon={lengthIcon} />
            <Component x={1987} y={912} w={90} h={31} inW={22} inputs={["T"]} outputs={["T"]} icon={lengthIcon} />
            <Watermark>
              <WatermarkText>学犀牛<WatermarkUrl>xuexiniu.com</WatermarkUrl></WatermarkText>
              <Seal><span>中</span><span>文</span><span>网</span></Seal>
            </Watermark>
          </Space>
        </Canvas>
      </GHWindow>
    </Desktop>
  </>
);

export default App;
